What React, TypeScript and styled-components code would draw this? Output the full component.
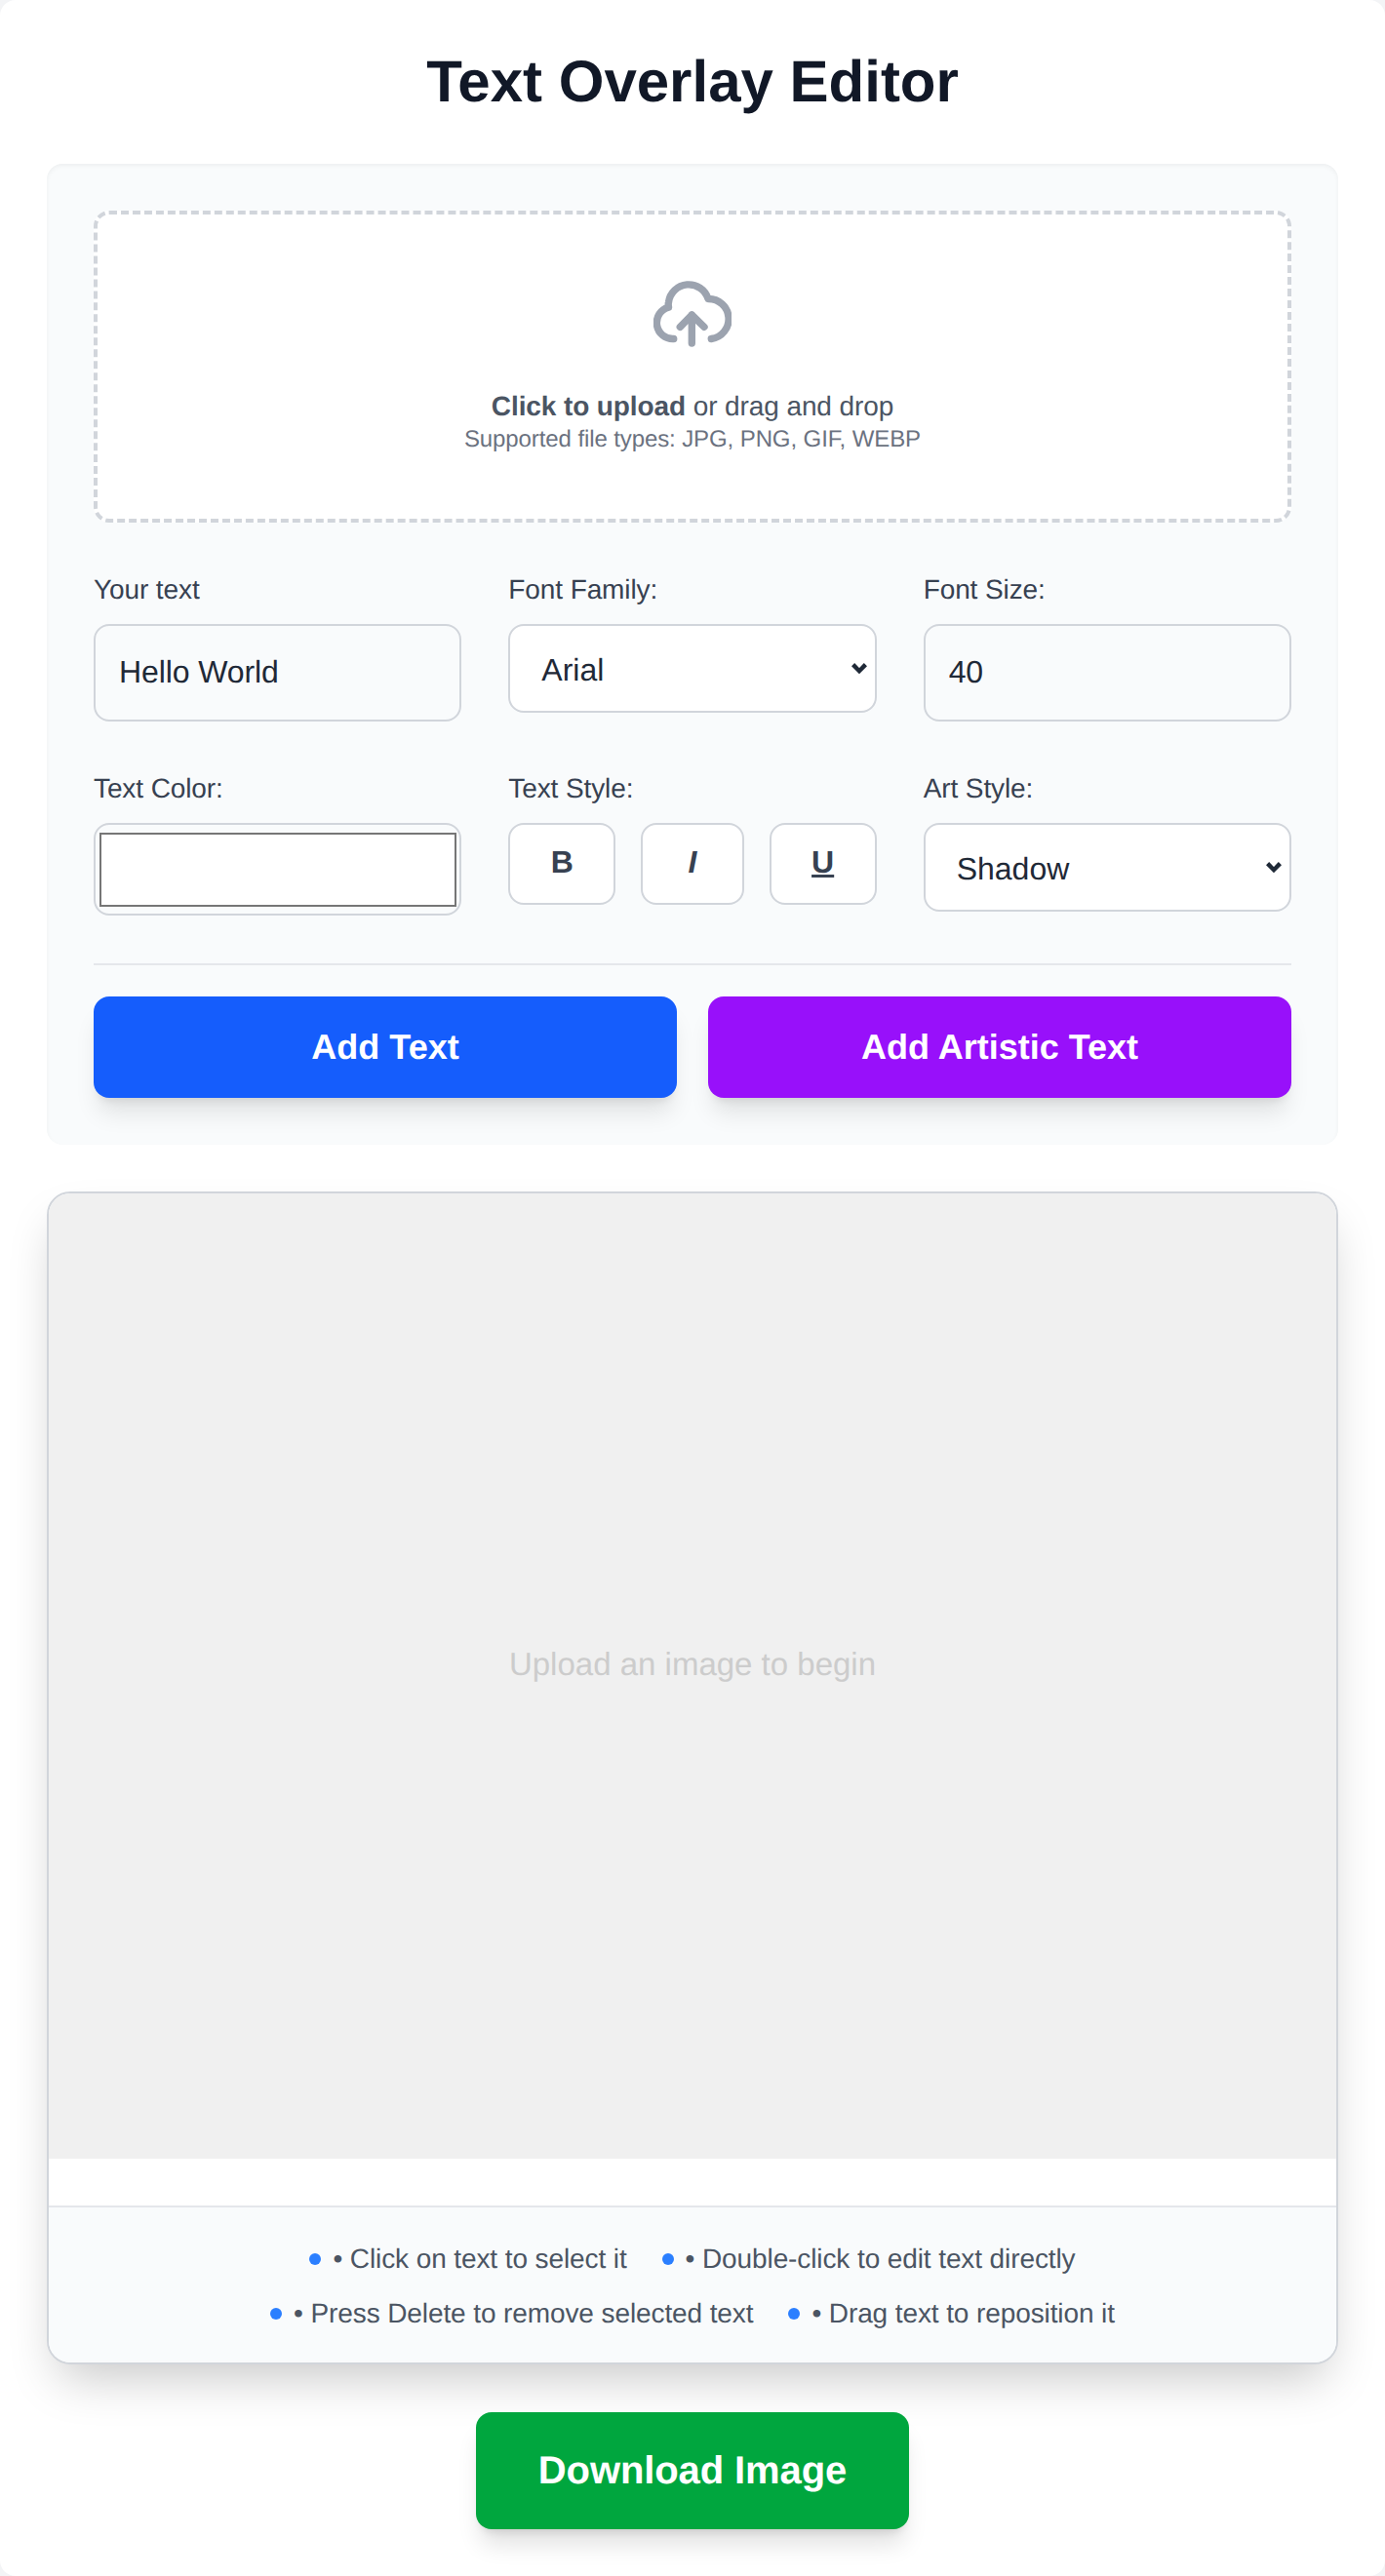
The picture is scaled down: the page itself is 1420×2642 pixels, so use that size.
import React from "react";
import styled, { createGlobalStyle } from "styled-components";

const Global = createGlobalStyle`
  html, body { margin: 0; padding: 0; background: #f3f4f6; }
  * { box-sizing: border-box; }
  body {
    font-family: "Liberation Sans", Arial, sans-serif;
    text-rendering: geometricPrecision;
  }
  input, select, button { text-rendering: geometricPrecision; }
`;

const chevron = `url("data:image/svg+xml,%3Csvg xmlns='http://www.w3.org/2000/svg' viewBox='0 0 18 13'%3E%3Cpath d='M2.6 2.6l6.4 6.6 6.4-6.6' fill='none' stroke='%231f2937' stroke-width='4.4'/%3E%3C/svg%3E")`;

const Page = styled.div`
  width: 1420px;
  height: 2642px;
  background: #fff;
  border-radius: 16px;
  padding: 48px;
  display: flex;
  flex-direction: column;
`;

const Title = styled.h1`
  margin: 0 0 48px;
  font-size: 60px;
  line-height: 72px;
  font-weight: 700;
  text-align: center;
  color: #111827;
`;

const Panel = styled.section`
  background: #f9fbfc;
  border-radius: 16px;
  padding: 48px;
  box-shadow: inset 0 2px 4px rgba(0, 0, 0, 0.05);
  margin-bottom: 48px;
`;

const Drop = styled.div`
  height: 320px;
  background: #fff;
  border: 4px dashed #d1d5db;
  border-radius: 16px;
  display: flex;
  flex-direction: column;
  align-items: center;
  padding-top: 68px;
  margin-bottom: 48px;
`;

const DropIcon = styled.svg`
  width: 80px;
  height: 68px;
  color: #9ca3af;
  margin-bottom: 43px;
  flex: none;
`;

const DropText = styled.p`
  margin: 0;
  font-size: 28px;
  line-height: 36px;
  letter-spacing: -0.1px;
  color: #4b5563;
`;

const DropHint = styled.p`
  margin: 0;
  font-size: 24px;
  line-height: 32px;
  letter-spacing: -0.1px;
  color: #6b7280;
`;

const Grid = styled.div`
  display: grid;
  grid-template-columns: repeat(3, 1fr);
  gap: 48px;
  align-items: start;
`;

const Field = styled.div`
  display: flex;
  flex-direction: column;
  min-width: 0;
`;

const Label = styled.label`
  font-size: 28px;
  line-height: 40px;
  letter-spacing: -0.1px;
  color: #374151;
  margin-bottom: 16px;
  padding-top: 1px;
  height: 40px;
`;

const TextInput = styled.input`
  width: 100%;
  height: 100px;
  padding: 0 24px 2px;
  border: 2px solid #d1d5db;
  border-radius: 16px;
  background: #f9fbfc;
  color: #1f2937;
  font: 32px "Liberation Sans", Arial, sans-serif;
  letter-spacing: -0.1px;
  outline: none;
  appearance: textfield;
`;

const Select = styled.select`
  width: 100%;
  height: 91px;
  padding: 2px 28px 0 32px;
  border: 2px solid #d1d5db;
  border-radius: 16px;
  background: #fff ${chevron} no-repeat right 7px center / 18px 13px;
  color: #1f2937;
  font: 32px "Liberation Sans", Arial, sans-serif;
  outline: none;
  appearance: none;
`;

const ColorInput = styled.input`
  width: 100%;
  height: 95px;
  padding: 0;
  border: 2px solid #d1d5db;
  border-radius: 16px;
  background: #f9fbfc;
  appearance: none;
  &::-webkit-color-swatch-wrapper {
    padding: 8px 3px 7px 4px;
  }
  &::-webkit-color-swatch {
    border: 2px solid #767676;
    border-radius: 0;
  }
`;

const StyleRow = styled.div`
  display: flex;
  justify-content: space-between;
`;

const StyleBtn = styled.button<{ $w: number; $i?: boolean; $u?: boolean }>`
  width: ${(p) => p.$w}px;
  height: 84px;
  border: 2px solid #d1d5db;
  border-radius: 16px;
  background: #fff;
  color: #374151;
  font: 700 32px "Liberation Sans", Arial, sans-serif;
  font-style: ${(p) => (p.$i ? "italic" : "normal")};
  text-decoration: ${(p) => (p.$u ? "underline" : "none")};
  padding: 0 0 4px;
`;

const Rule = styled.hr`
  border: 0;
  border-top: 2px solid #e5e7eb;
  margin: 49px 0 32px;
`;

const Actions = styled.div`
  display: grid;
  grid-template-columns: 1fr 1fr;
  gap: 32px;
`;

const ActionBtn = styled.button<{ $bg: string }>`
  height: 104px;
  border: 0;
  border-radius: 16px;
  background: ${(p) => p.$bg};
  color: #fff;
  font: 700 36px "Liberation Sans", Arial, sans-serif;
  box-shadow: 0 20px 25px -5px rgba(0, 0, 0, 0.1), 0 8px 10px -6px rgba(0, 0, 0, 0.1);
`;

const Stage = styled.section`
  border: 2px solid #d1d5db;
  border-radius: 24px;
  overflow: hidden;
  background: #fff;
  height: 1203px;
  display: flex;
  flex-direction: column;
  margin-bottom: 49px;
  flex: none;
  box-shadow: 0 25px 50px -12px rgba(0, 0, 0, 0.22);
`;

const Canvas = styled.div`
  height: 990px;
  padding-bottom: 24px;
  background: #f0f0f0;
  color: #cccccc;
  font-size: 33px;
  display: flex;
  align-items: center;
  justify-content: center;
  flex: none;
`;

const Gap = styled.div`
  height: 48px;
  flex: none;
`;

const Tips = styled.div`
  flex: 1;
  border-top: 2px solid #e5e7eb;
  background: #f9fbfc;
  display: flex;
  flex-direction: column;
  align-items: center;
  justify-content: center;
  gap: 16px;
  padding-top: 3px;
`;

const TipRow = styled.div`
  display: flex;
  gap: 36px;
`;

const Tip = styled.span`
  display: inline-flex;
  align-items: center;
  font-size: 28px;
  line-height: 40px;
  letter-spacing: -0.1px;
  color: #4b5563;
  &::before {
    content: "";
    width: 12px;
    height: 12px;
    border-radius: 50%;
    background: #2b7fff;
    margin-right: 12px;
  }
`;

const DownloadRow = styled.div`
  display: flex;
  justify-content: center;
`;

const Download = styled.button`
  width: 444px;
  height: 120px;
  border: 0;
  border-radius: 16px;
  background: #00a63e;
  color: #fff;
  font: 700 40px "Liberation Sans", Arial, sans-serif;
  letter-spacing: -0.1px;
  box-shadow: 0 20px 25px -5px rgba(0, 0, 0, 0.12), 0 8px 10px -6px rgba(0, 0, 0, 0.12);
`;

export default function App() {
  return (
    <Page>
      <Global />
      <Title>Text Overlay Editor</Title>
      <Panel>
        <Drop>
          <DropIcon viewBox="0 0 80 68" fill="none" stroke="currentColor" strokeWidth="7.4" strokeLinecap="round" strokeLinejoin="round">
            <path d="M20.7 59.5A16.5 16.5 0 0 1 15.5 27.1C15 24 15.2 23 15.5 22A20.8 20.8 0 0 1 56 18.5A20.6 20.6 0 0 1 59.3 59.5" />
            <path d="M39.3 64V35M27.3 47.3 39.3 35 52 47.3" />
          </DropIcon>
          <DropText><strong>Click to upload</strong> or drag and drop</DropText>
          <DropHint>Supported file types: JPG, PNG, GIF, WEBP</DropHint>
        </Drop>
        <Grid>
          <Field>
            <Label>Your text</Label>
            <TextInput defaultValue="Hello World" />
          </Field>
          <Field>
            <Label>Font Family:</Label>
            <Select defaultValue="Arial"><option>Arial</option></Select>
          </Field>
          <Field>
            <Label>Font Size:</Label>
            <TextInput type="number" defaultValue="40" />
          </Field>
          <Field>
            <Label>Text Color:</Label>
            <ColorInput type="color" defaultValue="#ffffff" />
          </Field>
          <Field>
            <Label>Text Style:</Label>
            <StyleRow>
              <StyleBtn $w={110}>B</StyleBtn>
              <StyleBtn $w={106} $i>I</StyleBtn>
              <StyleBtn $w={110} $u>U</StyleBtn>
            </StyleRow>
          </Field>
          <Field>
            <Label>Art Style:</Label>
            <Select defaultValue="Shadow"><option>Shadow</option></Select>
          </Field>
        </Grid>
        <Rule />
        <Actions>
          <ActionBtn $bg="#155dfc">Add Text</ActionBtn>
          <ActionBtn $bg="#9810fa">Add Artistic Text</ActionBtn>
        </Actions>
      </Panel>
      <Stage>
        <Canvas>Upload an image to begin</Canvas>
        <Gap />
        <Tips>
          <TipRow>
            <Tip>• Click on text to select it</Tip>
            <Tip>• Double-click to edit text directly</Tip>
          </TipRow>
          <TipRow>
            <Tip>• Press Delete to remove selected text</Tip>
            <Tip>• Drag text to reposition it</Tip>
          </TipRow>
        </Tips>
      </Stage>
      <DownloadRow>
        <Download>Download Image</Download>
      </DownloadRow>
    </Page>
  );
}
